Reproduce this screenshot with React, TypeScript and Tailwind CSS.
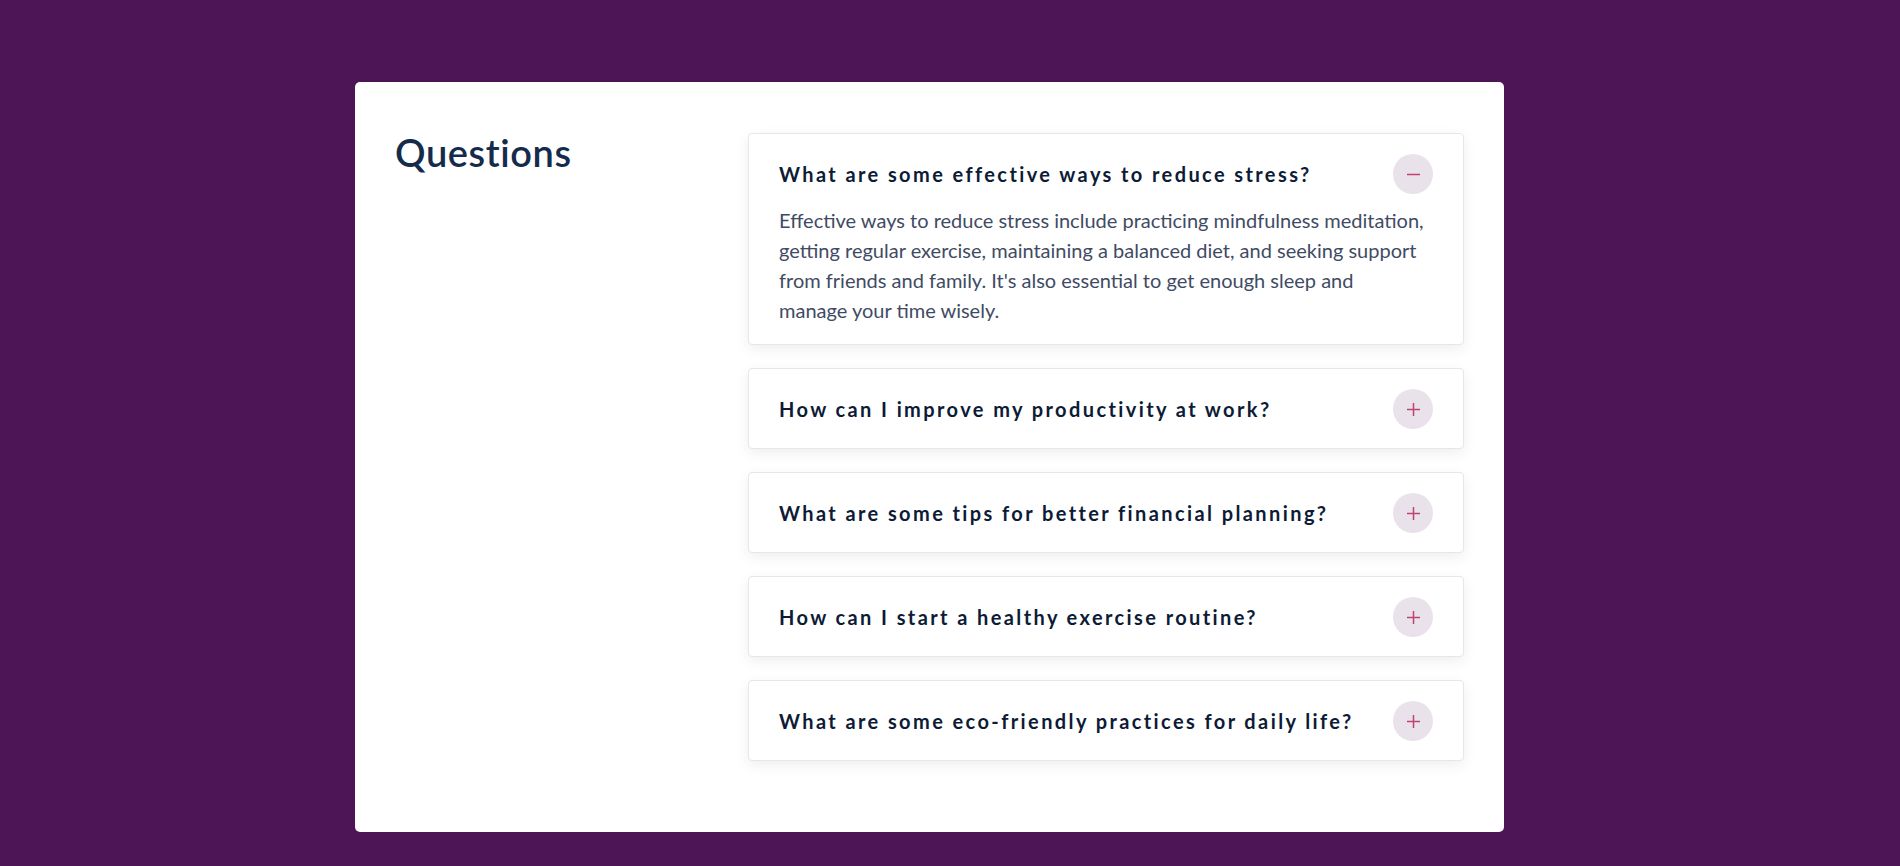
import { useState } from "react";

const faqs = [
  {
    q: "What are some effective ways to reduce stress?",
    a: "Effective ways to reduce stress include practicing mindfulness meditation, getting regular exercise, maintaining a balanced diet, and seeking support from friends and family. It's also essential to get enough sleep and manage your time wisely.",
  },
  {
    q: "How can I improve my productivity at work?",
    a: "Set clear goals, prioritize your tasks, take regular breaks and limit distractions such as notifications and unnecessary meetings.",
  },
  {
    q: "What are some tips for better financial planning?",
    a: "Create a budget, build an emergency fund, pay off high-interest debt and start saving for retirement as early as possible.",
  },
  {
    q: "How can I start a healthy exercise routine?",
    a: "Start small with activities you enjoy, set realistic goals, and gradually increase the intensity and duration of your workouts.",
  },
  {
    q: "What are some eco-friendly practices for daily life?",
    a: "Reduce waste, reuse and recycle, save energy at home, use public transport and choose sustainable products.",
  },
];

function Toggle({ open }: { open: boolean }) {
  return (
    <span className="flex h-10 w-10 shrink-0 items-center justify-center rounded-full bg-[#e9e2ea]">
      <svg width="13" height="13" viewBox="0 0 13 13" fill="none" stroke="#c2436f" strokeWidth="1.5">
        <line x1="0" y1="6.5" x2="13" y2="6.5" />
        {!open && <line x1="6.5" y1="0" x2="6.5" y2="13" />}
      </svg>
    </span>
  );
}

export default function App() {
  const [openIdx, setOpenIdx] = useState<number | null>(0);

  return (
    <div className="min-h-screen bg-[#4d1456] py-[82px] font-['Lato','Liberation_Sans',sans-serif]">
      <div className="ml-[355px] flex w-[1149px] rounded-[5px] bg-white pl-10 pr-10 pt-[51px] pb-[71px]">
        <div className="w-[353px] shrink-0">
          <h1 className="text-[38px] leading-none font-semibold tracking-[0.6px] text-[#142b4c]">Questions</h1>
        </div>
        <div className="flex flex-1 flex-col gap-[23px]">
          {faqs.map((f, i) => {
            const open = openIdx === i;
            return (
              <div
                key={i}
                className="rounded-[4px] border border-[#ebe4ec] bg-white px-[30px] pt-5 pb-[19px] shadow-[0_4px_14px_rgba(0,0,0,0.07)]"
              >
                <button
                  className="flex h-10 w-full items-center justify-between text-left"
                  onClick={() => setOpenIdx(open ? null : i)}
                >
                  <span className="text-[20px] font-bold tracking-[2.4px] text-[#0d1b36]">{f.q}</span>
                  <Toggle open={open} />
                </button>
                {open && (
                  <p className="mt-[11px] pr-2 text-[20px] leading-[30px] text-[#3f4b64]">{f.a}</p>
                )}
              </div>
            );
          })}
        </div>
      </div>
    </div>
  );
}
